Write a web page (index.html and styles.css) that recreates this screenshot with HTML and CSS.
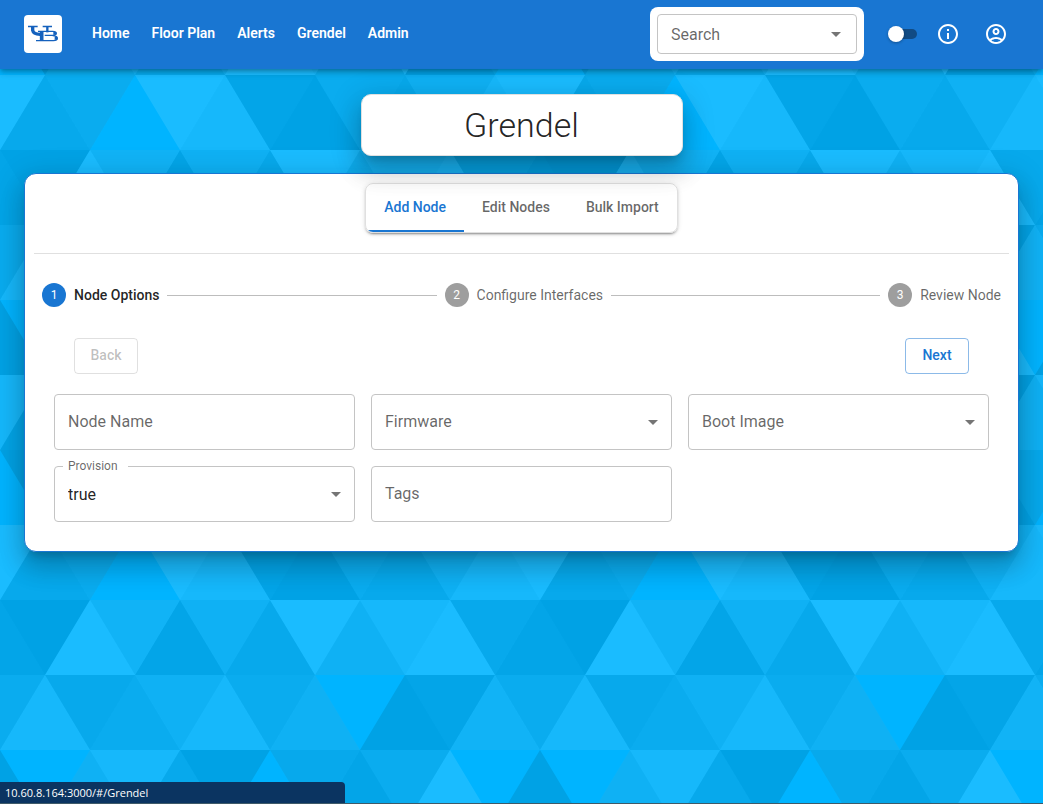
FILE: index.html
```html
<!DOCTYPE html>
<html lang="en">
<head>
<meta charset="utf-8">
<meta name="viewport" content="width=device-width, initial-scale=1">
<title>Grendel</title>
<link rel="stylesheet" href="styles.css">
</head>
<body>
<header class="appbar">
  <a class="logo" href="#/" aria-label="UB home">
    <svg viewBox="0 0 114 114" fill="none" stroke="#1561bd" aria-hidden="true">
      <path stroke-width="5" d="M12 34.5H41M56 34.5H84"/>
      <path stroke-width="10" d="M26 36V46Q28 58 48 58"/>
      <path stroke-width="7" d="M70 36V52"/>
      <path stroke-width="4" d="M42 49H86Q97 49 97 55T86 61H62M36 77H88Q100 77 100 70T86 62"/>
      <path stroke-width="11" d="M53 49V77"/>
      <path stroke-width="8" d="M92 51V59M96 65V74"/>
    </svg>
  </a>
  <nav class="nav">
    <a href="#/">Home</a>
    <a href="#/FloorPlan">Floor Plan</a>
    <a href="#/Alerts">Alerts</a>
    <a href="#/Grendel">Grendel</a>
    <a href="#/Admin">Admin</a>
  </nav>
  <div class="search">
    <div class="field field-small">
      <input id="search" type="text" class="control">
      <label for="search" class="label">Search</label>
      <svg class="arrow" viewBox="0 0 24 24" aria-hidden="true"><path d="M7 10l5 5 5-5z"/></svg>
    </div>
  </div>
  <input class="switch" type="checkbox" role="switch" aria-label="Dark mode">
  <button class="icon-button" type="button" aria-label="Information">
    <svg viewBox="0 0 24 24" aria-hidden="true"><path d="M11 7h2v2h-2zm0 4h2v6h-2zm1-9C6.480 2 2 6.480 2 12s4.480 10 10 10 10-4.480 10-10S17.520 2 12 2zm0 18c-4.410 0-8-3.590-8-8s3.590-8 8-8 8 3.590 8 8-3.590 8-8 8z"/></svg>
  </button>
  <button class="icon-button" type="button" aria-label="Account">
    <svg viewBox="0 0 24 24" aria-hidden="true"><path d="M12 2C6.480 2 2 6.480 2 12s4.480 10 10 10 10-4.480 10-10S17.520 2 12 2zM7.350 18.500C8.660 17.560 10.260 17 12 17s3.340.560 4.650 1.500C15.340 19.440 13.740 20 12 20s-3.340-.560-4.650-1.500zm10.790-1.380C16.450 15.800 14.320 15 12 15s-4.450.800-6.140 2.120C4.700 15.730 4 13.950 4 12c0-4.420 3.580-8 8-8s8 3.580 8 8c0 1.950-.700 3.730-1.860 5.120z"/><path d="M12 6c-1.930 0-3.500 1.570-3.500 3.500S10.070 13 12 13s3.500-1.570 3.500-3.500S13.930 6 12 6zm0 5c-.830 0-1.500-.670-1.500-1.500S11.170 8 12 8s1.500.670 1.500 1.500S12.830 11 12 11z"/></svg>
  </button>
</header>

<main class="page">
  <h1 class="title">Grendel</h1>
  <section class="card">
    <div class="tabs" role="tablist">
      <button class="tab tab-active" type="button" role="tab" aria-selected="true">Add Node</button>
      <button class="tab" type="button" role="tab" aria-selected="false">Edit Nodes</button>
      <button class="tab" type="button" role="tab" aria-selected="false">Bulk Import</button>
    </div>
    <hr class="divider">
    <ol class="stepper">
      <li class="step step-active"><span class="step-number">1</span>Node Options</li>
      <li class="connector" aria-hidden="true"></li>
      <li class="step"><span class="step-number">2</span>Configure Interfaces</li>
      <li class="connector" aria-hidden="true"></li>
      <li class="step"><span class="step-number">3</span>Review Node</li>
    </ol>
    <div class="actions">
      <button class="button" type="button" disabled>Back</button>
      <button class="button" type="button">Next</button>
    </div>
    <form class="fields">
      <div class="field">
        <input id="name" type="text" class="control">
        <label for="name" class="label">Node Name</label>
      </div>
      <div class="field">
        <select id="firmware" class="control"><option value=""></option></select>
        <label for="firmware" class="label">Firmware</label>
        <svg class="arrow" viewBox="0 0 24 24" aria-hidden="true"><path d="M7 10l5 5 5-5z"/></svg>
      </div>
      <div class="field">
        <select id="image" class="control"><option value=""></option></select>
        <label for="image" class="label">Boot Image</label>
        <svg class="arrow" viewBox="0 0 24 24" aria-hidden="true"><path d="M7 10l5 5 5-5z"/></svg>
      </div>
      <div class="field">
        <select id="provision" class="control"><option>true</option></select>
        <label for="provision" class="label label-raised">Provision</label>
        <svg class="arrow" viewBox="0 0 24 24" aria-hidden="true"><path d="M7 10l5 5 5-5z"/></svg>
      </div>
      <div class="field">
        <input id="tags" type="text" class="control">
        <label for="tags" class="label">Tags</label>
      </div>
    </form>
  </section>
</main>
<div class="status">10.60.8.164:3000/#/Grendel</div>
</body>
</html>
```

FILE: styles.css
```css
* { box-sizing: border-box; }

body {
  margin: 0;
  min-height: 100vh;
  display: flex;
  flex-direction: column;
  font-family: Roboto, "Liberation Sans", sans-serif;
  font-size: 16px;
  color: rgba(0, 0, 0, 0.87);
  border-bottom: 1px solid #3f5a68;
  /* Triangle mosaic, one 540x450 tile, one path per shade */
  background: #00b4ff url("data:image/svg+xml,%3Csvg xmlns='http://www.w3.org/2000/svg' width='540' height='450' viewBox='0 0 540 450'%3E%3Cg fill-opacity='.1'%3E%3Cpath d='M0 0h90l-45 75zM450 0l45 75h-90zM315 75l45 75h-90zM0 150h90l-45 75zM405 225l45 75h-90zM180 300h90l-45 75zM0 300l45 75h-90zM540 300l45 75h-90zM135 375l45 75h-90zM315 375l45 75h-90zM405 375h90l-45 75z'/%3E%3Cpath fill='%23222' d='M225 75h90l-45 75zM0 150l45 75h-90zM540 150l45 75h-90zM180 150l45 75h-90zM405 225h90l-45 75zM360 300l45 75h-90zM45 375l45 75h-90z'/%3E%3Cpath fill='%23444' d='M450 0h90l-45 75zM180 0l45 75h-90zM45 75l45 75h-90zM405 75l45 75h-90zM450 150h90l-45 75zM270 150l45 75h-90zM45 225h90l-45 75zM270 300h90l-45 75zM180 300l45 75h-90zM45 375h90l-45 75z'/%3E%3Cpath fill='%23666' d='M90 0l45 75h-90zM360 0l45 75h-90zM45 75h90l-45 75zM315 75h90l-45 75zM135 225l45 75h-90zM225 225h90l-45 75zM495 225h90l-45 75zM-45 225h90l-45 75zM360 300h90l-45 75zM225 375h90l-45 75z'/%3E%3Cpath fill='%23999' d='M180 0h90l-45 75zM405 75h90l-45 75zM180 150h90l-45 75zM360 150l45 75h-90zM315 225l45 75h-90zM135 225h90l-45 75zM90 300l45 75h-90zM495 375l45 75h-90z'/%3E%3Cpath fill='%23AAA' d='M90 0h90l-45 75zM90 150h90l-45 75zM495 225l45 75h-90zM405 375l45 75h-90zM135 375h90l-45 75z'/%3E%3Cpath fill='%23DDD' d='M270 0h90l-45 75zM225 75l45 75h-90zM495 75l45 75h-90zM360 150h90l-45 75zM45 225l45 75h-90zM225 225l45 75h-90zM90 300h90l-45 75zM495 375h90l-45 75zM-45 375h90l-45 75z'/%3E%3Cpath fill='%23FFF' d='M360 0h90l-45 75zM270 0l45 75h-90zM135 75h90l-45 75zM495 75h90l-45 75zM-45 75h90l-45 75zM270 150h90l-45 75zM90 150l45 75h-90zM450 150l45 75h-90zM450 300l45 75h-90zM315 375h90l-45 75z'/%3E%3C/g%3E%3C/svg%3E");
}

.appbar {
  display: flex;
  align-items: center;
  min-height: 69px;
  padding: 7px 35px 8px 24px;
  background: #1976d2;
  color: #fff;
  box-shadow: 0 2px 4px -1px rgba(0, 0, 0, 0.2), 0 4px 5px rgba(0, 0, 0, 0.14), 0 1px 10px rgba(0, 0, 0, 0.12);
}

.logo {
  width: 38px;
  height: 38px;
  border-radius: 4px;
  background: #fff;
}

.logo svg { display: block; }

.nav {
  display: flex;
  flex: 1;
  gap: 22px;
  margin-left: 30px;
  padding-bottom: 2px;
}

.nav a {
  color: #fff;
  font-size: 14px;
  font-weight: 600;
  line-height: 24px;
  text-decoration: none;
}

.search {
  width: 214px;
  padding: 7px;
  border-radius: 8px;
  background: #fff;
}

.switch {
  appearance: none;
  position: relative;
  width: 26px;
  height: 10px;
  margin: 0 19px 0 27px;
  border-radius: 5px;
  background: #114b84;
}

.switch::before {
  content: "";
  position: absolute;
  left: -3px;
  top: -3px;
  width: 16px;
  height: 16px;
  border-radius: 50%;
  background: #fff;
  box-shadow: 0 1px 3px rgba(0, 0, 0, 0.3);
}

.icon-button {
  width: 24px;
  height: 24px;
  padding: 0;
  border: 0;
  background: none;
}

.icon-button + .icon-button { margin-left: 24px; }

.icon-button svg {
  display: block;
  fill: #fff;
}

.page {
  display: flex;
  flex-direction: column;
  flex: 1;
  padding: 25px 24px;
}

.title {
  position: relative;
  z-index: 1;
  align-self: center;
  width: 322px;
  max-width: 100%;
  margin: 0 0 17px;
  padding: 10px 16px;
  border: 1px solid #e0e0e0;
  border-radius: 10px;
  background: #fff;
  font-size: 34px;
  font-weight: 300;
  line-height: 40px;
  text-align: center;
  box-shadow: 0 8px 10px -5px rgba(0, 0, 0, 0.2), 0 16px 24px 2px rgba(0, 0, 0, 0.14), 0 6px 30px 5px rgba(0, 0, 0, 0.12);
}

.card {
  display: flex;
  flex-direction: column;
  padding: 9px 9px 29px;
  border: 1px solid #1976d2;
  border-radius: 12px;
  background: #fff;
  box-shadow: 0 8px 10px -5px rgba(0, 0, 0, 0.2), 0 16px 24px 2px rgba(0, 0, 0, 0.14), 0 6px 30px 5px rgba(0, 0, 0, 0.12);
}

.tabs {
  display: flex;
  align-self: center;
  overflow: hidden;
  border: 1px solid #e0e0e0;
  border-radius: 8px;
  box-shadow: 0 3px 1px -2px rgba(0, 0, 0, 0.2), 0 2px 2px rgba(0, 0, 0, 0.14), 0 1px 5px rgba(0, 0, 0, 0.12);
}

.tab {
  height: 48px;
  padding: 0 18px;
  border: 0;
  border-bottom: 2px solid transparent;
  background: none;
  color: rgba(0, 0, 0, 0.6);
  font: 500 14px/20px Roboto, "Liberation Sans", sans-serif;
}

.tab-active {
  border-color: #1976d2;
  color: #1976d2;
}

.divider {
  width: 100%;
  height: 1px;
  margin: 20px 0 29px;
  border: 0;
  background: #e0e0e0;
}

.stepper {
  display: flex;
  align-items: center;
  margin: 0;
  padding: 0 8px;
  list-style: none;
}

.step {
  display: flex;
  align-items: center;
  gap: 8px;
  color: rgba(0, 0, 0, 0.6);
  font-size: 14px;
  line-height: 24px;
}

.step-active {
  color: rgba(0, 0, 0, 0.87);
  font-weight: 500;
}

.step-number {
  width: 24px;
  height: 24px;
  border-radius: 50%;
  background: #9e9e9e;
  color: #fff;
  font-size: 12px;
  text-align: center;
}

.step-active .step-number {
  background: #1976d2;
  font-weight: 400;
}

.connector {
  flex: 1;
  height: 1px;
  margin: 0 8px;
  background: #bdbdbd;
}

.actions {
  display: flex;
  justify-content: space-between;
  margin: 31px 40px 20px;
}

.button {
  min-width: 64px;
  height: 36px;
  padding: 0 15px 2px;
  border: 1px solid rgba(25, 118, 210, 0.5);
  border-radius: 4px;
  background: none;
  color: #1976d2;
  font: 500 14px/24px Roboto, "Liberation Sans", sans-serif;
}

.button:disabled {
  border-color: rgba(0, 0, 0, 0.12);
  color: rgba(0, 0, 0, 0.26);
}

.fields {
  display: grid;
  grid-template-columns: repeat(3, 1fr);
  gap: 16px;
  margin: 0 20px;
}

.field { position: relative; }

.control {
  appearance: none;
  display: block;
  width: 100%;
  height: 56px;
  padding: 2px 32px 0 13px;
  border: 1px solid #c4c4c4;
  border-radius: 4px;
  background: none;
  color: rgba(0, 0, 0, 0.87);
  font: 400 16px/24px Roboto, "Liberation Sans", sans-serif;
}

.field-small .control { height: 40px; }

.label {
  position: absolute;
  left: 14px;
  top: 0;
  bottom: 2px;
  display: flex;
  align-items: center;
  color: rgba(0, 0, 0, 0.6);
  pointer-events: none;
}

.field-small .label { bottom: 0; }

.label-raised {
  left: 9px;
  top: -8px;
  bottom: auto;
  padding: 0 10px 0 5px;
  background: #fff;
  font-size: 12px;
  line-height: 16px;
}

.arrow {
  position: absolute;
  right: 7px;
  top: 0;
  bottom: 0;
  width: 24px;
  height: 24px;
  margin: auto 0;
  fill: rgba(0, 0, 0, 0.54);
  pointer-events: none;
}

.field-small .arrow { right: 9px; }

.status {
  position: fixed;
  left: 0;
  bottom: 1px;
  width: 345px;
  padding: 3px 5px 2px;
  border-radius: 0 4px 0 0;
  background: #0b3461;
  color: #fff;
  font: 11px/16px "Open Sans", "Noto Sans", sans-serif;
}
```
